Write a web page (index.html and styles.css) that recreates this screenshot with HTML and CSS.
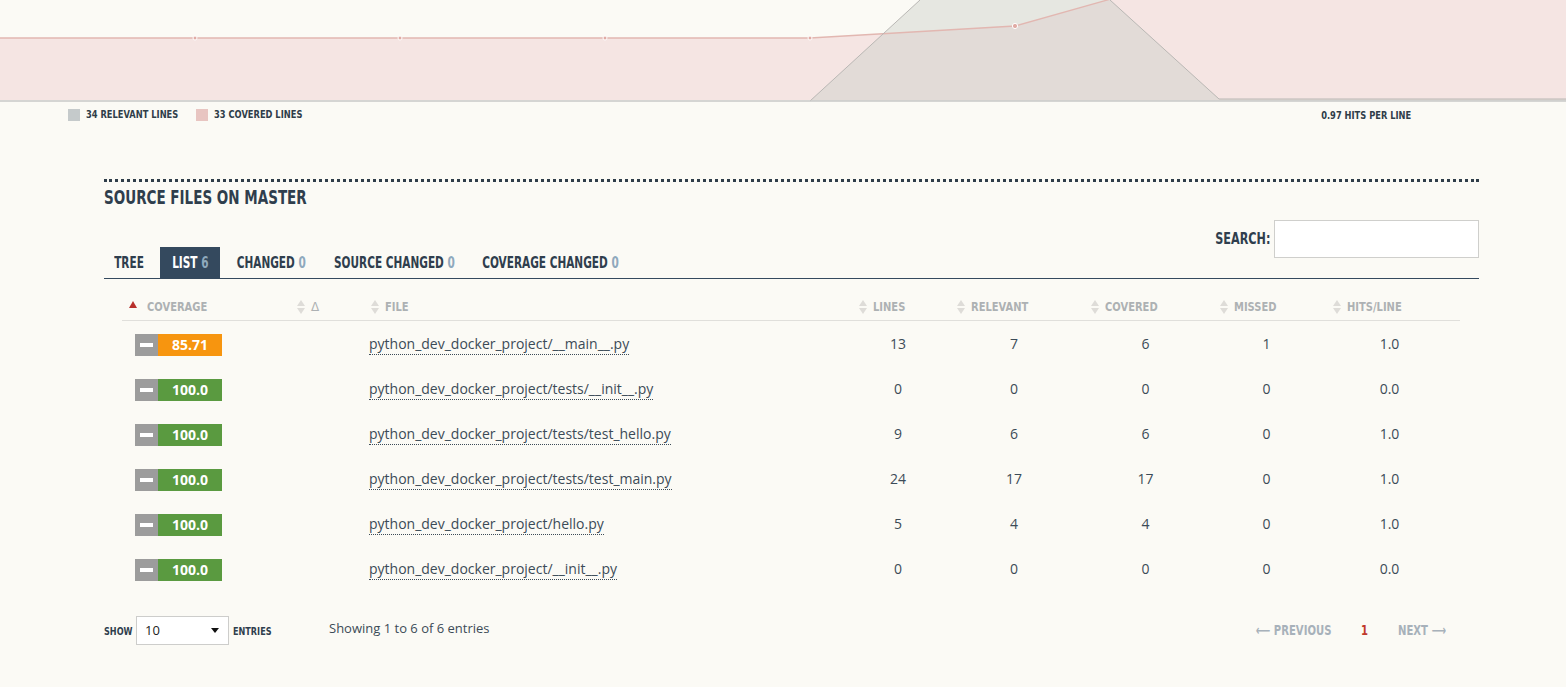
FILE: index.html
```html
<!DOCTYPE html>
<html>
<head>
<meta charset="utf-8">
<link rel="stylesheet" href="styles.css">
</head>
<body>
<div class="chart">
  <svg class="chart-svg" width="1566" height="102" viewBox="0 0 1566 102">
    <polygon points="0,38 195,38 400,38 605,38 810,38 1015,26 1125,-5 1566,-5 1566,100 0,100" fill="#f5e5e3"/>
    <polygon points="810,101 920,0 1110,0 1219,99 1566,99 1566,101" fill="#c9ccc6" fill-opacity="0.42"/>
    <polyline points="0,38 195,38 400,38 605,38 810,38 1015,26 1125,-5" fill="none" stroke="#e2b7b1" stroke-width="1.3"/>
    <polyline points="810,101 920,0" fill="none" stroke="#b9b7b4" stroke-width="1"/>
    <polyline points="1110,0 1219,99 1566,99" fill="none" stroke="#b9b7b4" stroke-width="1"/>
    <line x1="0" y1="101" x2="1566" y2="101" stroke="#c9c9c7" stroke-width="1.5"/>
    <g fill="#e0aba4" stroke="#fff" stroke-width="1">
      <circle cx="195" cy="38" r="2"/>
      <circle cx="400" cy="38" r="2"/>
      <circle cx="605" cy="38" r="2"/>
      <circle cx="810" cy="38" r="2"/>
      <circle cx="1015" cy="26" r="2.6"/>
    </g>
  </svg>
  <div class="legend">
    <div class="legend-left">
      <span class="legend-item li-1"><i class="sw sw-gray"></i><span class="sx sx-legend">34 RELEVANT LINES</span></span>
      <span class="legend-item"><i class="sw sw-pink"></i><span class="sx sx-legend">33 COVERED LINES</span></span>
    </div>
    <span class="legend-item hits"><span class="sx sx-legend sx-right">0.97 HITS PER LINE</span></span>
  </div>
</div>

<section class="files">
  <h2 class="title"><span class="sx sx-title">SOURCE FILES ON MASTER</span></h2>
  <div class="toolbar">
    <nav class="tabs">
      <span class="tab t-tree"><span class="sx sx-tab">TREE</span></span>
      <span class="tab t-list active"><span class="sx sx-tab">LIST <em>6</em></span></span>
      <span class="tab t-changed"><span class="sx sx-tab">CHANGED <em>0</em></span></span>
      <span class="tab t-source"><span class="sx sx-tab">SOURCE CHANGED <em>0</em></span></span>
      <span class="tab t-coverage"><span class="sx sx-tab">COVERAGE CHANGED <em>0</em></span></span>
    </nav>
    <label class="search"><span class="sx sx-search">SEARCH:</span><input type="text"></label>
  </div>

  <div class="table">
    <div class="row head">
      <div class="c c-cov"><span class="sort-up"></span><span class="sx sx-head">COVERAGE</span></div>
      <div class="c c-delta"><span class="sort"></span>Δ</div>
      <div class="c c-file"><span class="sort"></span><span class="sx sx-head">FILE</span></div>
      <div class="c c-num"><span class="sort"></span><span class="sx sx-head">LINES</span></div>
      <div class="c c-num"><span class="sort"></span><span class="sx sx-head">RELEVANT</span></div>
      <div class="c c-num"><span class="sort"></span><span class="sx sx-head">COVERED</span></div>
      <div class="c c-num"><span class="sort"></span><span class="sx sx-head">MISSED</span></div>
      <div class="c c-num"><span class="sort"></span><span class="sx sx-head">HITS/LINE</span></div>
    </div>

    <div class="row">
      <div class="c c-cov"><span class="badge"><b class="dash"></b><span class="pct orange">85.71</span></span></div>
      <div class="c c-delta"></div>
      <div class="c c-file"><a>python_dev_docker_project/__main__.py</a></div>
      <div class="c c-num">13</div><div class="c c-num">7</div><div class="c c-num">6</div><div class="c c-num">1</div><div class="c c-num">1.0</div>
    </div>
    <div class="row">
      <div class="c c-cov"><span class="badge"><b class="dash"></b><span class="pct green">100.0</span></span></div>
      <div class="c c-delta"></div>
      <div class="c c-file"><a>python_dev_docker_project/tests/__init__.py</a></div>
      <div class="c c-num">0</div><div class="c c-num">0</div><div class="c c-num">0</div><div class="c c-num">0</div><div class="c c-num">0.0</div>
    </div>
    <div class="row">
      <div class="c c-cov"><span class="badge"><b class="dash"></b><span class="pct green">100.0</span></span></div>
      <div class="c c-delta"></div>
      <div class="c c-file"><a>python_dev_docker_project/tests/test_hello.py</a></div>
      <div class="c c-num">9</div><div class="c c-num">6</div><div class="c c-num">6</div><div class="c c-num">0</div><div class="c c-num">1.0</div>
    </div>
    <div class="row">
      <div class="c c-cov"><span class="badge"><b class="dash"></b><span class="pct green">100.0</span></span></div>
      <div class="c c-delta"></div>
      <div class="c c-file"><a>python_dev_docker_project/tests/test_main.py</a></div>
      <div class="c c-num">24</div><div class="c c-num">17</div><div class="c c-num">17</div><div class="c c-num">0</div><div class="c c-num">1.0</div>
    </div>
    <div class="row">
      <div class="c c-cov"><span class="badge"><b class="dash"></b><span class="pct green">100.0</span></span></div>
      <div class="c c-delta"></div>
      <div class="c c-file"><a>python_dev_docker_project/hello.py</a></div>
      <div class="c c-num">5</div><div class="c c-num">4</div><div class="c c-num">4</div><div class="c c-num">0</div><div class="c c-num">1.0</div>
    </div>
    <div class="row">
      <div class="c c-cov"><span class="badge"><b class="dash"></b><span class="pct green">100.0</span></span></div>
      <div class="c c-delta"></div>
      <div class="c c-file"><a>python_dev_docker_project/__init__.py</a></div>
      <div class="c c-num">0</div><div class="c c-num">0</div><div class="c c-num">0</div><div class="c c-num">0</div><div class="c c-num">0.0</div>
    </div>
  </div>

  <div class="footer">
    <div class="length">
      <span class="lbl lbl-show"><span class="sx sx-lbl">SHOW</span></span>
      <span class="select">10<i class="caret"></i></span>
      <span class="lbl lbl-entries"><span class="sx sx-lbl">ENTRIES</span></span>
    </div>
    <div class="info">Showing 1 to 6 of 6 entries</div>
    <div class="pager">
      <span class="pg pg-prev"><span class="sx sx-pg sx-right">⟵ PREVIOUS</span></span>
      <span class="pg cur"><span class="sx sx-pg sx-center">1</span></span>
      <span class="pg pg-next"><span class="sx sx-pg">NEXT ⟶</span></span>
    </div>
  </div>
</section>
</body>
</html>
```

FILE: styles.css
```css
* { box-sizing: border-box; }
html, body { margin: 0; padding: 0; }
body {
  background: #fbfaf5;
  font-family: "Open Sans", "Liberation Sans", sans-serif;
  color: #3c4b57;
  width: 1566px;
  height: 687px;
  overflow: hidden;
}

/* condensed display text: DejaVu Sans Condensed, squeezed horizontally */
.sx {
  display: inline-block;
  white-space: nowrap;
  flex: none;
  font-family: "DejaVu Sans Condensed", "DejaVu Sans", sans-serif;
  font-weight: bold;
  transform-origin: left center;
}
.sx-right { transform-origin: right center; }
.sx-center { transform-origin: center center; }
.sx-title { transform: scaleX(0.75); }
.sx-tab { transform: scaleX(0.78); transform-origin: center center; }
.sx-legend { transform: scaleX(0.84); }
.sx-legend.sx-right { transform-origin: right center; }
.sx-head { transform: scaleX(0.85); }
.sx-search { transform: scaleX(0.83); transform-origin: right center; }
.sx-lbl { transform: scaleX(0.82); }
.sx-pg { transform: scaleX(0.8); }
.sx-pg.sx-right { transform-origin: right center; }
.sx-pg.sx-center { transform-origin: center center; }

.chart-svg { display: block; }
.legend {
  display: flex;
  align-items: center;
  justify-content: space-between;
  padding: 3px 155px 0 68px;
  height: 22px;
}
.legend-left { display: flex; }
.legend-item {
  display: flex;
  align-items: center;
  font-size: 11px;
  color: #2f3d49;
}
.li-1 { width: 128px; }
.legend-item.hits { padding-top: 2px; }
.sw { display: inline-block; width: 12px; height: 12px; margin-right: 6px; }
.sw-gray { background: #c5cacb; }
.sw-pink { background: #e8c5c1; }

.files {
  margin: 55px 87px 0 104px;
  border-top: 3px dotted #2f3d49;
}
.title {
  margin: 3px 0 0;
  font-size: 20px;
  line-height: 24px;
  color: #2f3e4d;
  font-weight: bold;
}
.toolbar {
  display: flex;
  justify-content: space-between;
  align-items: flex-end;
  border-bottom: 1px solid #34495e;
  margin-top: 12px;
  height: 58px;
}
.tabs { display: flex; align-items: flex-end; gap: 5px; }
.tab {
  display: flex;
  justify-content: center;
  align-items: center;
  font-size: 15px;
  color: #2f3e4d;
  height: 31px;
}
.t-tree { width: 51px; }
.t-list { width: 60px; }
.t-changed { width: 93px; }
.t-source { width: 143px; }
.t-coverage { width: 159px; }
.tab em { font-style: normal; color: #8fa9bd; }
.tab.active { background: #34495e; color: #fff; }
.search {
  display: flex;
  align-items: center;
  align-self: flex-start;
  font-size: 15px;
  color: #2f3e4d;
  margin-top: -1px;
}
.search input {
  margin: 0 0 0 4px;
  width: 205px;
  height: 38px;
  border: 1px solid #cfcfcc;
  background: #fff;
}

.table { margin: 14px 19px 0 18px; }
.row {
  display: grid;
  grid-template-columns: 168px 74px 489px 98px 134px 129px 113px 133px;
  height: 45px;
  align-items: center;
  font-size: 14px;
  color: #3c4b57;
}
.row.head {
  height: 28px;
  border-bottom: 1px solid #e0dfdb;
  font-size: 13px;
  color: #adb1b3;
}
.head .c { display: flex; align-items: center; padding-left: 6px; }
.head .c-delta { padding-left: 7px; font-family: "DejaVu Sans", sans-serif; font-weight: normal; font-size: 12px; }
.head .c-file { padding-left: 7px; }
.sort {
  display: inline-block;
  width: 8px;
  height: 14px;
  margin-right: 6px;
  position: relative;
}
.sort::before, .sort::after {
  content: "";
  position: absolute;
  left: 0;
  border-left: 4px solid transparent;
  border-right: 4px solid transparent;
}
.sort::before { top: 0; border-bottom: 6px solid #dedcd8; }
.sort::after { bottom: 0; border-top: 6px solid #dedcd8; }
.sort-up {
  display: inline-block;
  width: 0; height: 0;
  border-left: 4px solid transparent;
  border-right: 4px solid transparent;
  border-bottom: 7px solid #b8302b;
  margin-right: 10px;
  margin-left: 1px;
  margin-top: -5px;
}
.c-cov { padding-left: 13px; }
.badge { display: inline-flex; height: 22px; }
.dash {
  width: 23px;
  background: #9c9c9c;
  display: flex;
  align-items: center;
  justify-content: center;
}
.dash::before { content: ""; width: 13px; height: 4px; background: #fff; }
.pct {
  width: 64px;
  color: #fff;
  font-weight: bold;
  font-size: 14px;
  display: flex;
  align-items: center;
  justify-content: center;
}
.orange { background: #f7950f; }
.green { background: #5a9a40; }
.c-file { padding-left: 5px; }
.c-file a {
  color: #3c4b57;
  border-bottom: 1px dotted #3c4b57;
  padding-bottom: 1px;
}
.c-num { text-align: center; padding-right: 8px; }

.footer {
  display: flex;
  align-items: center;
  margin-top: 24px;
  height: 30px;
}
.length { display: flex; align-items: center; width: 225px; }
.lbl {
  font-size: 11px;
  color: #2f3e4d;
}
.lbl-show { width: 32px; }
.lbl-entries { margin-left: 4px; }
.select {
  position: relative;
  width: 93px;
  height: 29px;
  background: #fff;
  border: 1px solid #cdcdcb;
  font-size: 13px;
  color: #222;
  padding-left: 8px;
  line-height: 27px;
}
.caret {
  position: absolute;
  right: 9px;
  top: 11px;
  border-left: 4px solid transparent;
  border-right: 4px solid transparent;
  border-top: 5px solid #111;
}
.info { font-size: 13px; color: #3c4b57; margin-top: -4px; }
.pager {
  margin-left: auto;
  margin-right: 34px;
  display: flex;
  font-size: 14px;
  color: #a7b1ba;
}
.pg { display: flex; }
.pg-prev { width: 80px; justify-content: flex-end; }
.pg.cur { color: #c0392b; width: 67px; justify-content: center; }
.pg-next { width: 47px; }
```
